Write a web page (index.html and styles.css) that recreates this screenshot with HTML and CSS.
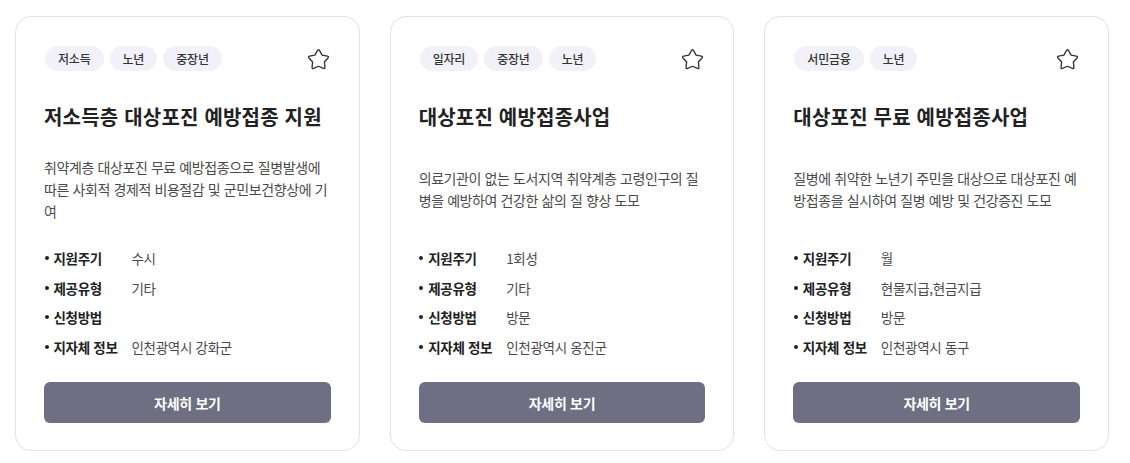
FILE: index.html
```html
<!DOCTYPE html>
<html lang="ko">
<head>
<meta charset="utf-8">
<link rel="stylesheet" href="styles.css">
</head>
<body>
<div class="grid">
  <div class="card">
    <div class="top">
      <div class="tags"><span class="tag">저소득</span><span class="tag">노년</span><span class="tag">중장년</span></div>
      <svg class="star" viewBox="0 0 24 24"><path d="M11.19 3.89 Q12 2.5 12.81 3.89 L15.23 8.05 L19.94 9.07 Q21.51 9.41 20.44 10.61 L17.23 14.2 L17.72 18.99 Q17.88 20.59 16.41 19.94 L12 18 L7.59 19.94 Q6.12 20.59 6.28 18.99 L6.77 14.2 L3.56 10.61 Q2.49 9.41 4.06 9.07 L8.77 8.05 Z"/></svg>
    </div>
    <h2 class="title">저소득층 대상포진 예방접종 지원</h2>
    <div class="desc"><p>취약계층 대상포진 무료 예방접종으로 질병발생에 따른 사회적 경제적 비용절감 및 군민보건향상에 기여</p></div>
    <ul class="info">
      <li><span class="label">지원주기</span><span class="value">수시</span></li>
      <li><span class="label">제공유형</span><span class="value">기타</span></li>
      <li><span class="label">신청방법</span><span class="value"></span></li>
      <li><span class="label">지자체 정보</span><span class="value">인천광역시 강화군</span></li>
    </ul>
    <button class="btn">자세히 보기</button>
  </div>
  <div class="card">
    <div class="top">
      <div class="tags"><span class="tag">일자리</span><span class="tag">중장년</span><span class="tag">노년</span></div>
      <svg class="star" viewBox="0 0 24 24"><path d="M11.19 3.89 Q12 2.5 12.81 3.89 L15.23 8.05 L19.94 9.07 Q21.51 9.41 20.44 10.61 L17.23 14.2 L17.72 18.99 Q17.88 20.59 16.41 19.94 L12 18 L7.59 19.94 Q6.12 20.59 6.28 18.99 L6.77 14.2 L3.56 10.61 Q2.49 9.41 4.06 9.07 L8.77 8.05 Z"/></svg>
    </div>
    <h2 class="title">대상포진 예방접종사업</h2>
    <div class="desc"><p>의료기관이 없는 도서지역 취약계층 고령인구의 질병을 예방하여 건강한 삶의 질 향상 도모</p></div>
    <ul class="info">
      <li><span class="label">지원주기</span><span class="value">1회성</span></li>
      <li><span class="label">제공유형</span><span class="value">기타</span></li>
      <li><span class="label">신청방법</span><span class="value">방문</span></li>
      <li><span class="label">지자체 정보</span><span class="value">인천광역시 옹진군</span></li>
    </ul>
    <button class="btn">자세히 보기</button>
  </div>
  <div class="card">
    <div class="top">
      <div class="tags"><span class="tag">서민금융</span><span class="tag">노년</span></div>
      <svg class="star" viewBox="0 0 24 24"><path d="M11.19 3.89 Q12 2.5 12.81 3.89 L15.23 8.05 L19.94 9.07 Q21.51 9.41 20.44 10.61 L17.23 14.2 L17.72 18.99 Q17.88 20.59 16.41 19.94 L12 18 L7.59 19.94 Q6.12 20.59 6.28 18.99 L6.77 14.2 L3.56 10.61 Q2.49 9.41 4.06 9.07 L8.77 8.05 Z"/></svg>
    </div>
    <h2 class="title">대상포진 무료 예방접종사업</h2>
    <div class="desc"><p>질병에 취약한 노년기 주민을 대상으로 대상포진 예방접종을 실시하여 질병 예방 및 건강증진 도모</p></div>
    <ul class="info">
      <li><span class="label">지원주기</span><span class="value">월</span></li>
      <li><span class="label">제공유형</span><span class="value">현물지급,현금지급</span></li>
      <li><span class="label">신청방법</span><span class="value">방문</span></li>
      <li><span class="label">지자체 정보</span><span class="value">인천광역시 동구</span></li>
    </ul>
    <button class="btn">자세히 보기</button>
  </div>
</div>
</body>
</html>
```
FILE: styles.css
```css
* { box-sizing: border-box; }
html, body { margin: 0; padding: 0; background: #fff; }
body {
  font-family: "Noto Sans CJK KR", "Noto Sans", sans-serif;
  color: #222;
}
.grid {
  display: grid;
  grid-template-columns: repeat(3, 1fr);
  gap: 30px;
  width: 1094px;
  margin: 16px 0 0 15px;
}
.card {
  border: 1px solid #e2e2e2;
  border-radius: 16px;
  padding: 29px 28px 27px 28px;
  display: flex;
  flex-direction: column;
  height: 435px;
}
.top {
  display: flex;
  justify-content: space-between;
  align-items: flex-start;
  height: 25px;
}
.tags { display: flex; gap: 6px; padding-left: 1px; }
.tag {
  background: #f2f1f9;
  color: #333;
  font-size: 12px;
  font-weight: 500;
  line-height: 25px;
  height: 25px;
  padding: 0 13px;
  border-radius: 13px;
  letter-spacing: -0.2px;
}
.star {
  width: 27px;
  height: 27px;
  margin-top: -0.5px;
  margin-right: -1px;
  fill: none;
  stroke: #333;
  stroke-width: 1.2;
  stroke-linejoin: round;
}
.title {
  margin: 32px 0 0 0;
  font-size: 20px;
  line-height: 28px;
  font-weight: 700;
  color: #222;
  letter-spacing: 0.2px;
}
.desc {
  height: 66px;
  margin-top: 25px;
  display: flex;
  align-items: center;
}
.desc p {
  margin: 0;
  font-size: 14px;
  line-height: 22px;
  color: #4a4a4a;
  letter-spacing: -0.4px;
}
.info {
  list-style: none;
  margin: 26px 0 0 0;
  padding: 0;
  display: flex;
  flex-direction: column;
  gap: 9.5px;
}
.info li {
  display: flex;
  align-items: center;
  font-size: 13.5px;
  line-height: 20px;
  letter-spacing: -0.3px;
}
.info li::before {
  content: "";
  width: 4px;
  height: 4px;
  border-radius: 50%;
  background: #222;
  margin: 0 5px 0 0.5px;
}
.label {
  width: 78px;
  font-weight: 700;
  color: #222;
}
.value { color: #4a4a4a; }
.btn {
  margin-top: auto;
  height: 41px;
  border: none;
  border-radius: 6px;
  background: #6e6f82;
  color: #fff;
  font-family: inherit;
  font-size: 14px;
  font-weight: 700;
  letter-spacing: -0.3px;
}
```
